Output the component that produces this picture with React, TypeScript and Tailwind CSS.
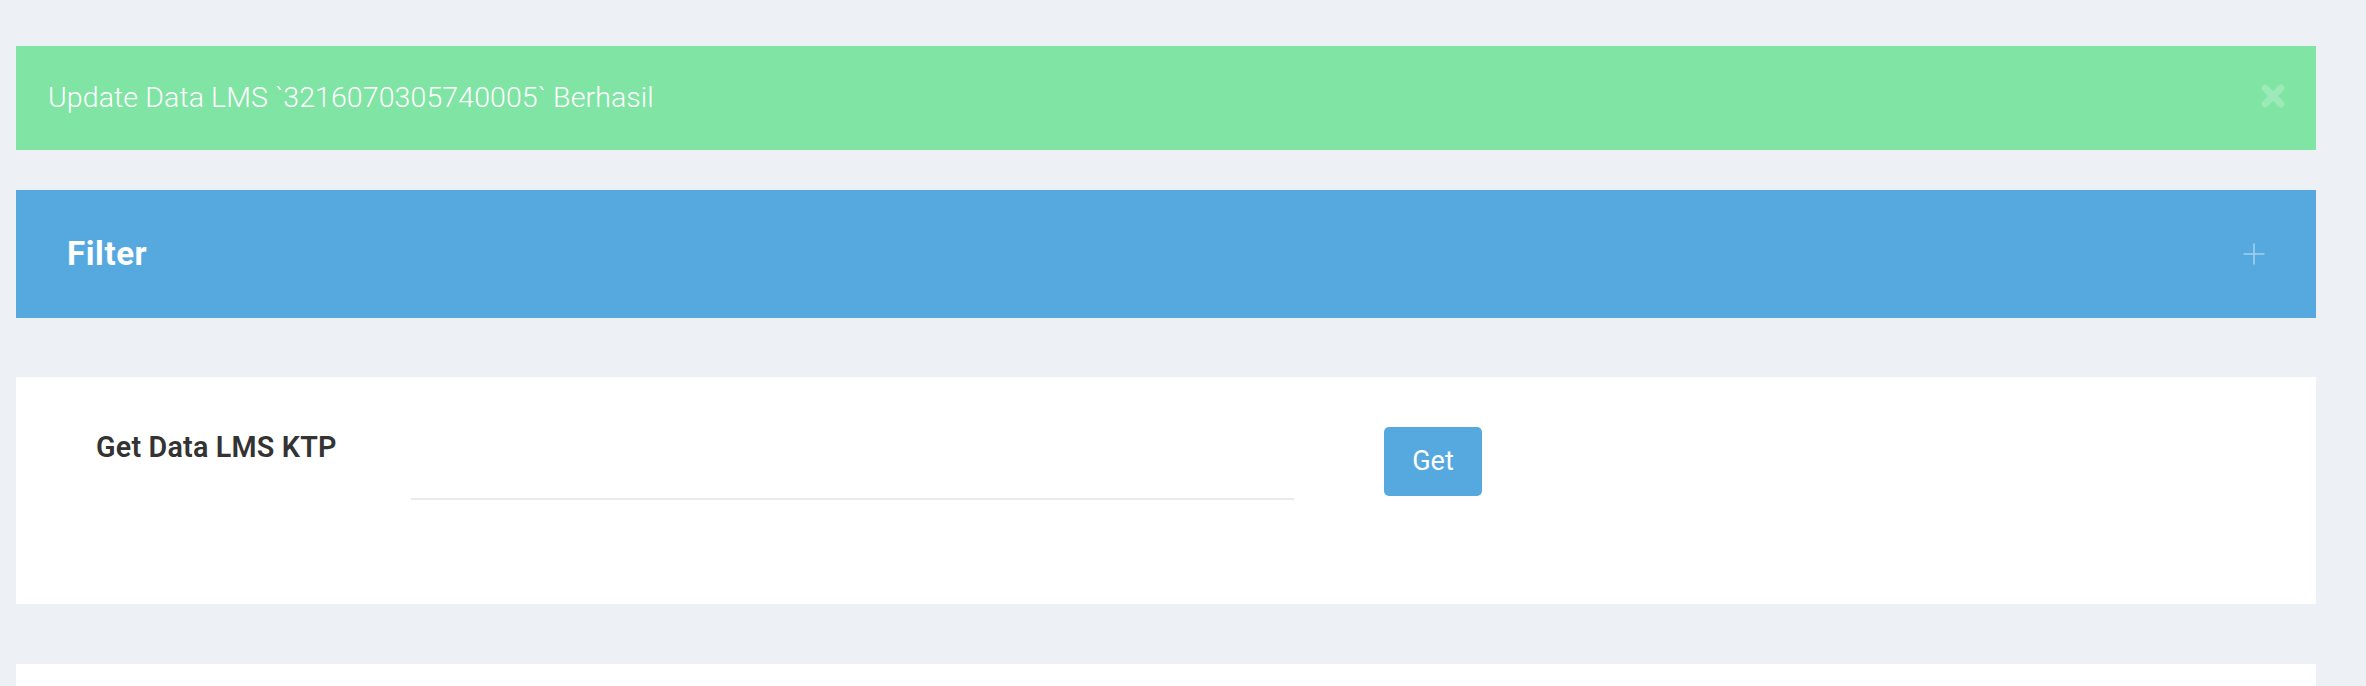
import { useState } from "react";

function CloseIcon() {
  return (
    <svg width="26" height="26" viewBox="0 0 26 26" aria-hidden>
      <path
        d="M5 5 L21 21 M21 5 L5 21"
        stroke="white"
        strokeOpacity="0.22"
        strokeWidth="7"
        strokeLinecap="round"
      />
    </svg>
  );
}

function PlusIcon() {
  return (
    <svg width="24" height="24" viewBox="0 0 24 24" aria-hidden>
      <path d="M12 1.5 V22.5 M1.5 12 H22.5" stroke="white" strokeOpacity="0.45" strokeWidth="1.6" />
    </svg>
  );
}

export default function App() {
  const [ktp, setKtp] = useState("");
  const [showAlert, setShowAlert] = useState(true);

  return (
    <div className="min-h-[686px] bg-[#edf1f5] pt-[46px] pl-[16px] font-['Roboto',sans-serif]">
      <div className="w-[2300px] flex flex-col">
        {showAlert && (
          <div className="h-[104px] bg-[#80e4a4] flex items-center justify-between pl-[32px] pr-[30px] mb-[40px]">
            <span className="text-[28.5px] font-light text-white tracking-[0.1px]">
              Update Data LMS `3216070305740005` Berhasil
            </span>
            <button onClick={() => setShowAlert(false)} className="cursor-pointer mb-[4px]">
              <CloseIcon />
            </button>
          </div>
        )}

        <div className="h-[128px] bg-[#56a9df] flex items-center justify-between pl-[51px] pr-[50px]">
          <h2 className="text-[33px] font-bold text-white leading-none tracking-[0.6px] mb-[2px]">
            Filter
          </h2>
          <PlusIcon />
        </div>

        <div className="mt-[59px] h-[227px] bg-white flex items-start pl-[80px] pt-[50px]">
          <label className="w-[315px] pt-[2px] text-[28.7px] font-semibold text-[#333333] leading-[36px] tracking-[0.2px]">
            Get Data LMS KTP
          </label>
          <input
            value={ktp}
            onChange={(e) => setKtp(e.target.value)}
            className="w-[883px] h-[73px] border-b-2 border-[#ebebeb] outline-none text-[24px] text-[#333]"
          />
          <button className="ml-[90px] w-[98px] h-[69px] rounded-[5px] bg-[#56a9df] text-white text-[27px] cursor-pointer">
            Get
          </button>
        </div>

        <div className="mt-[60px] h-[40px] bg-white" />
      </div>
    </div>
  );
}
